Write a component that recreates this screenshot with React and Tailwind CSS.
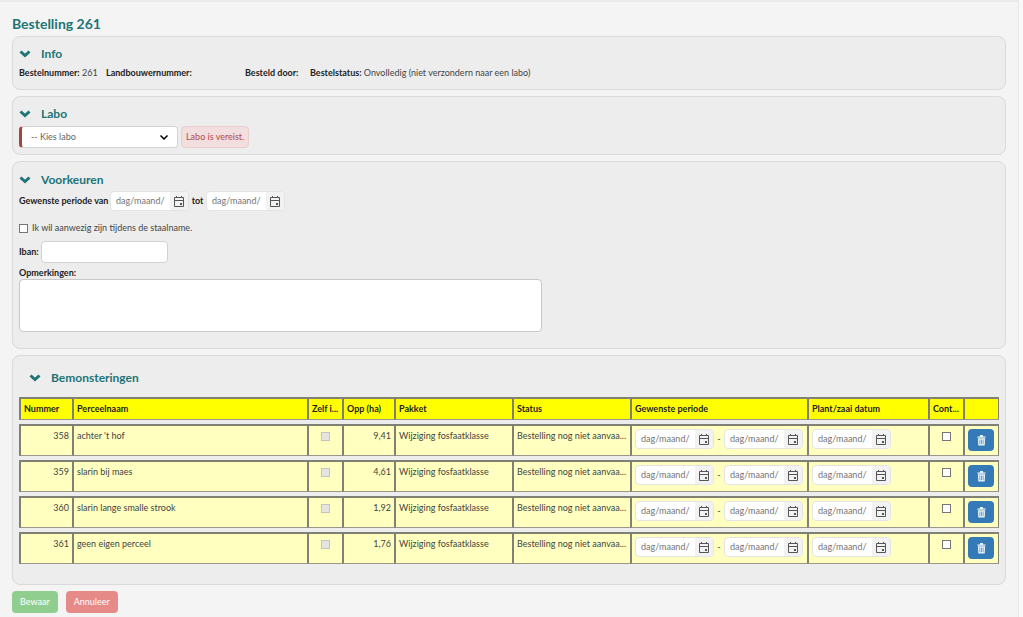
import { useState } from "react";

const samples = [
    { id: 358, name: "achter 't hof", area: "9,41" },
    { id: 359, name: "slarin bij maes", area: "4,61" },
    { id: 360, name: "slarin lange smalle strook", area: "1,92" },
    { id: 361, name: "geen eigen perceel", area: "1,76" },
];

const Chevron = ({ className }) => (
    <svg viewBox="0 0 12 8" className={className} fill="none" stroke="currentColor" strokeWidth="3" aria-hidden="true">
        <path d="M1.5 1.5 6 5.5 10.5 1.5" />
    </svg>
)

const CalendarIcon = () => (
    <svg viewBox="0 0 10 11" className="h-[11px] w-[10px]" fill="none" stroke="#555555" aria-hidden="true">
        <path d="M.5 1.500h9v9h-9zM.5 4.500h9M2.500 0v2M7.500 0v2" />
        <path d="M6 7h2v2H6z" fill="#555555" stroke="none" />
    </svg>
)

const TrashIcon = () => (
    <svg viewBox="0 0 10 12" className="h-[11px] w-[9px]" aria-hidden="true">
        <path d="M3.500 0h3l.5 1.500h2.500V3h-9V1.500H3z" fill="#e6f0f8" />
        <path d="M1 3.500h8l-.4 8H1.400z" fill="#e6f0f8" />
        <path d="M3.200 5v5M5 5v5M6.800 5v5" stroke="#337ab7" strokeWidth=".7" />
    </svg>
)

const DateField = ({ label }) => {
    const [value, setValue] = useState("");

    return (
        <span className="inline-flex h-5 w-[79px] shrink-0 overflow-hidden rounded-sm border border-[#e4e4e4] bg-white">
            <input
                type="text"
                aria-label={label}
                placeholder="dag/maand/"
                className="w-[59px] min-w-0 pl-[5px] text-[9px] text-[#555555] outline-none placeholder:text-[#757575]"
                value={value}
                onChange={(e)=>setValue(e.target.value)}
            />
            <button type="button" aria-label="Kies datum" className="flex flex-1 items-center justify-center bg-[#f2f2f2]">
                <CalendarIcon />
            </button>
        </span>
    )
}

const Panel = ({ title, className, titleClass, children }) => {
    const [open, setOpen] = useState(true);

    return (
        <section className={`rounded-lg border border-[#dadada] bg-[#ededed] px-[6px] ${className}`}>
            <h2 className={titleClass}>
                <button
                    type="button"
                    aria-expanded={open}
                    className="flex h-4 items-center gap-[10px] text-[12px] leading-4 font-bold text-[#217476]"
                    onClick={()=>setOpen(!open)}
                >
                    <Chevron className="h-2 w-3" />
                    {title}
                </button>
            </h2>
            {open && children}
        </section>
    )
}

const box = "size-[9px] appearance-none border align-top";
const cell = "border-t-2 border-b border-l-2 border-[#808074] border-b-[#98988c] px-[3px] last:border-r";

const SampleRow = ({ sample }) => (
    <tr className="h-8 bg-[#ffffbf] align-top">
        <td className={`${cell} pt-1 text-right`}>{sample.id}</td>
        <td className={`${cell} truncate pt-1`}>{sample.name}</td>
        <td className={`${cell} pt-[6px] text-center`}>
            <input type="checkbox" disabled aria-label="Zelf inplannen" className={`${box} border-[#c4c4c4] bg-[#e4e4e0]`} />
        </td>
        <td className={`${cell} pt-1 text-right`}>{sample.area}</td>
        <td className={`${cell} truncate pt-1`}>Wijziging fosfaatklasse</td>
        <td className={`${cell} pt-1`}>
            <div className="truncate">Bestelling nog niet aanvaa...</div>
        </td>
        <td className={`${cell} pt-[3px]`}>
            <div className="flex items-center">
                <DateField label="Periode van" />
                <span className="w-[10px] text-center">-</span>
                <DateField label="Periode tot" />
            </div>
        </td>
        <td className={`${cell} pt-[3px]`}>
            <div className="flex">
                <DateField label="Plant/zaai datum" />
            </div>
        </td>
        <td className={`${cell} pt-[6px] text-center`}>
            <input type="checkbox" aria-label="Controle" className={`${box} border-[#767676] bg-white checked:bg-[#337ab7]`} />
        </td>
        <td className={`${cell} pt-[3px]`}>
            <button type="button" aria-label="Verwijder" className="flex h-[22px] w-[26px] items-center justify-center rounded-sm bg-[#337ab7]">
                <TrashIcon />
            </button>
        </td>
    </tr>
)

const App = () => {
    const [labo, setLabo] = useState("");
    const [present, setPresent] = useState(false);

    return (
        <div className="min-h-screen bg-[#f8f8f8] pr-1 font-['Lato',sans-serif] text-[9px] leading-3 text-[#444444]">
            <main className="min-h-screen border-t-2 border-r border-t-[#eaeaea] border-r-[#e8e8e8] bg-[#f4f4f4] pt-3 pr-3 pb-[3px] pl-3">
                <h1 className="mb-[2px] text-[14px] leading-5 font-bold text-[#217476]">Bestelling 261</h1>

                <div className="flex flex-col gap-[6px]">
                    <Panel title="Info" className="h-[54px] pt-[9px]">
                        <div className="mt-[5px] flex">
                            <p className="w-[87px]"><b className="text-[#222222]">Bestelnummer:</b> 261</p>
                            <p className="w-[139px]"><b className="text-[#222222]">Landbouwernummer:</b></p>
                            <p className="w-[65px]"><b className="text-[#222222]">Besteld door:</b></p>
                            <p><b className="text-[#222222]">Bestelstatus:</b> Onvolledig (niet verzondern naar een labo)</p>
                        </div>
                    </Panel>

                    <Panel title="Labo" className="pt-[9px] pb-[6px]">
                        <div className="mt-1 flex items-center gap-[3px]">
                            <div className="relative w-[159px]">
                                <select
                                    aria-label="Labo"
                                    className="h-[22px] w-full appearance-none rounded-sm border border-l-3 border-[#d4d4d4] border-l-[#a94442] bg-white pl-[9px] text-[#666666]"
                                    value={labo}
                                    onChange={(e)=>setLabo(e.target.value)}
                                >
                                    <option value="">-- Kies labo</option>
                                </select>
                                <svg viewBox="0 0 8 5" className="pointer-events-none absolute top-[9px] right-[10px] h-[5px] w-2" fill="none" stroke="#000000" strokeWidth="1.5">
                                    <path d="M.5.5 4 4 7.500.5" />
                                </svg>
                            </div>
                            <span className="rounded-sm border border-[#ebccd1] bg-[#f2dede] px-1 py-1 text-[#b14a50]">Labo is vereist.</span>
                        </div>
                    </Panel>

                    <Panel title="Voorkeuren" className="pt-[10px] pb-4">
                        <div className="mt-[3px] flex items-center">
                            <b className="w-[91px] text-[#222222]">Gewenste periode van</b>
                            <DateField label="Gewenste periode van" />
                            <b className="w-[17px] text-center text-[#222222]">tot</b>
                            <DateField label="Gewenste periode tot" />
                        </div>
                        <label className="mt-[11px] flex items-center gap-1">
                            <input
                                type="checkbox"
                                className={`${box} border-[#767676] bg-white checked:bg-[#337ab7]`}
                                checked={present}
                                onChange={(e)=>setPresent(e.target.checked)}
                            />
                            Ik wil aanwezig zijn tijdens de staalname.
                        </label>
                        <div className="mt-[7px] flex items-center gap-[2px]">
                            <label htmlFor="iban" className="font-bold text-[#222222]">Iban:</label>
                            <input id="iban" type="text" className="h-[22px] w-[127px] rounded-sm border border-[#d0d0d0] bg-white px-2" />
                        </div>
                        <label htmlFor="remarks" className="mt-1 block font-bold text-[#222222]">Opmerkingen:</label>
                        <textarea id="remarks" className="block h-[53px] w-[523px] max-w-full resize-none rounded-sm border border-[#c8c8c8] bg-white p-1" />
                    </Panel>

                    <Panel title="Bemonsteringen" titleClass="pl-[10px]" className="pt-[14px] pb-4">
                        <table className="mt-[7px] w-full table-fixed border-separate border-spacing-x-0 border-spacing-y-1">
                            <colgroup>
                                <col className="w-[53px]" />
                                <col />
                                <col className="w-[35px]" />
                                <col className="w-[52px]" />
                                <col className="w-[118px]" />
                                <col className="w-[118px]" />
                                <col className="w-[177px]" />
                                <col className="w-[121px]" />
                                <col className="w-[35px]" />
                                <col className="w-[36px]" />
                            </colgroup>
                            <thead>
                                <tr className="h-[23px] bg-[#ffff00] text-left text-[#222222]">
                                    {["Nummer", "Perceelnaam", "Zelf i...", "Opp (ha)", "Pakket", "Status", "Gewenste periode", "Plant/zaai datum", "Cont...", ""].map((title, i)=>(
                                        <th key={i} className={`${cell} whitespace-nowrap`}>{title}</th>
                                    ))}
                                </tr>
                            </thead>
                            <tbody>
                                {samples.map(sample=>(
                                    <SampleRow key={sample.id} sample={sample} />
                                ))}
                            </tbody>
                        </table>
                    </Panel>
                </div>

                <div className="mt-[6px] flex gap-2 text-white">
                    <button type="button" className="h-[22px] rounded-sm bg-[#8fce8f] px-2">Bewaar</button>
                    <button type="button" className="h-[22px] rounded-sm bg-[#e68a87] px-2">Annuleer</button>
                </div>
            </main>
        </div>
    );
}

export default App;
